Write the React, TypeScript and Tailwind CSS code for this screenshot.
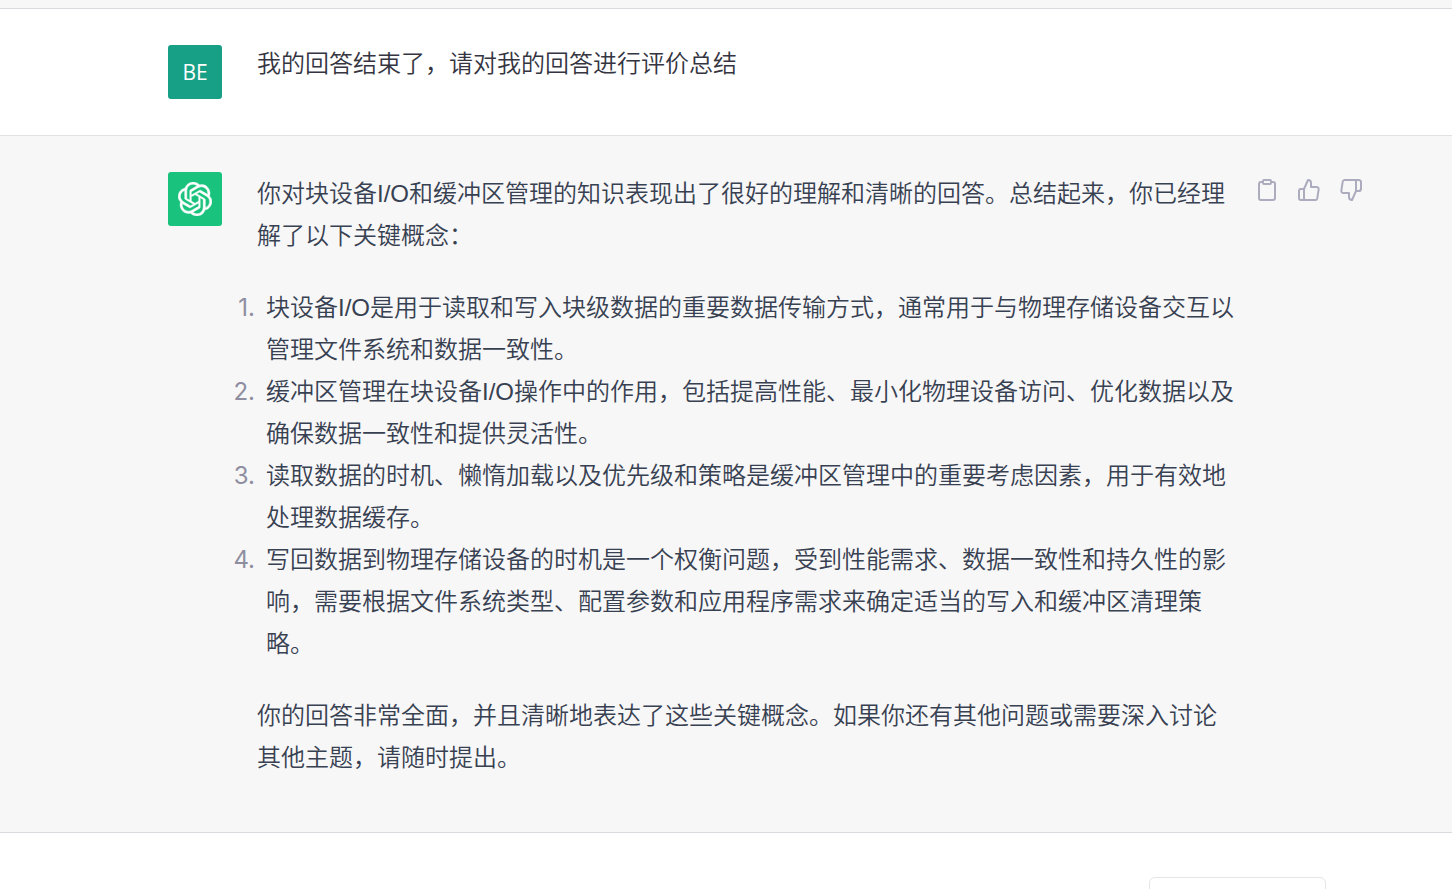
import type { ReactNode } from "react";
import { FiClipboard, FiThumbsDown, FiThumbsUp } from "react-icons/fi";
import { SiOpenai } from "react-icons/si";

const concepts = [
  "块设备I/O是用于读取和写入块级数据的重要数据传输方式，通常用于与物理存储设备交互以管理文件系统和数据一致性。",
  "缓冲区管理在块设备I/O操作中的作用，包括提高性能、最小化物理设备访问、优化数据以及确保数据一致性和提供灵活性。",
  "读取数据的时机、懒惰加载以及优先级和策略是缓冲区管理中的重要考虑因素，用于有效地处理数据缓存。",
  "写回数据到物理存储设备的时机是一个权衡问题，受到性能需求、数据一致性和持久性的影响，需要根据文件系统类型、配置参数和应用程序需求来确定适当的写入和缓冲区清理策略。",
];

const actions = [
  { label: "复制", Icon: FiClipboard },
  { label: "赞", Icon: FiThumbsUp },
  { label: "踩", Icon: FiThumbsDown },
];

function Avatar({ className, children }: { className: string; children: ReactNode }) {
  return (
    <div
      className={`flex size-[54px] shrink-0 items-center justify-center rounded-[3px] font-['Open_Sans',sans-serif] text-[21px] leading-[30px] font-normal text-white ${className}`}
    >
      {children}
    </div>
  );
}

export default function App() {
  return (
    <main
      lang="zh-CN"
      className="flex h-screen flex-col overflow-hidden bg-white font-['Liberation_Sans','Noto_Sans_CJK_SC',sans-serif] text-2xl font-[350]"
    >
      <div className="h-[9px] shrink-0 border-b border-[#d9d9de] bg-[#f7f7f8]" />

      <section className="shrink-0 border-b border-[#e1e1e3] py-9 pr-[89px] pl-[168px]">
        <div className="flex gap-[35px]">
          <Avatar className="bg-[#17a085]">BE</Avatar>
          <p className="min-w-0 flex-1 pt-px leading-9 text-[#343541]">我的回答结束了，请对我的回答进行评价总结</p>
        </div>
      </section>

      <section className="shrink-0 border-b border-[#d9d9de] bg-[#f7f7f8] pt-9 pr-[89px] pb-[53px] pl-[168px]">
        <div className="flex">
          <Avatar className="bg-[#19c37d]">
            <SiOpenai className="size-[34px] stroke-current [stroke-width:0.3]" aria-hidden="true" />
          </Avatar>
          <div className="ml-[35px] min-w-0 flex-1 space-y-[30px] pt-px leading-[42px] text-[#374151]">
            <p>
              你对块设备I/O和缓冲区管理的知识表现出了很好的理解和清晰的回答。总结起来，你已经理解了以下关键概念：
            </p>
            <ol className="-ml-9">
              {concepts.map((text, i) => (
                <li key={i} className="flex gap-[11px]">
                  <span className="w-[34px] shrink-0 text-right font-['Inter',sans-serif] font-normal text-[#8e8ea0]">{i + 1}.</span>
                  <span className="min-w-0 flex-1">{text}</span>
                </li>
              ))}
            </ol>
            <p>你的回答非常全面，并且清晰地表达了这些关键概念。如果你还有其他问题或需要深入讨论其他主题，请随时提出。</p>
          </div>
          <div className="ml-4 flex shrink-0 items-start gap-[18px] pt-[6px] text-[#acacbe]">
            {actions.map(({ label, Icon }) => (
              <button key={label} type="button" aria-label={label}>
                <Icon className="size-6" />
              </button>
            ))}
          </div>
        </div>
      </section>

      <div className="flex shrink-0 justify-end pt-11 pr-[126px]">
        <button type="button" aria-label="重新生成" className="h-14 w-[177px] rounded-md border border-[#e5e5e5] bg-white" />
      </div>
    </main>
  );
}
